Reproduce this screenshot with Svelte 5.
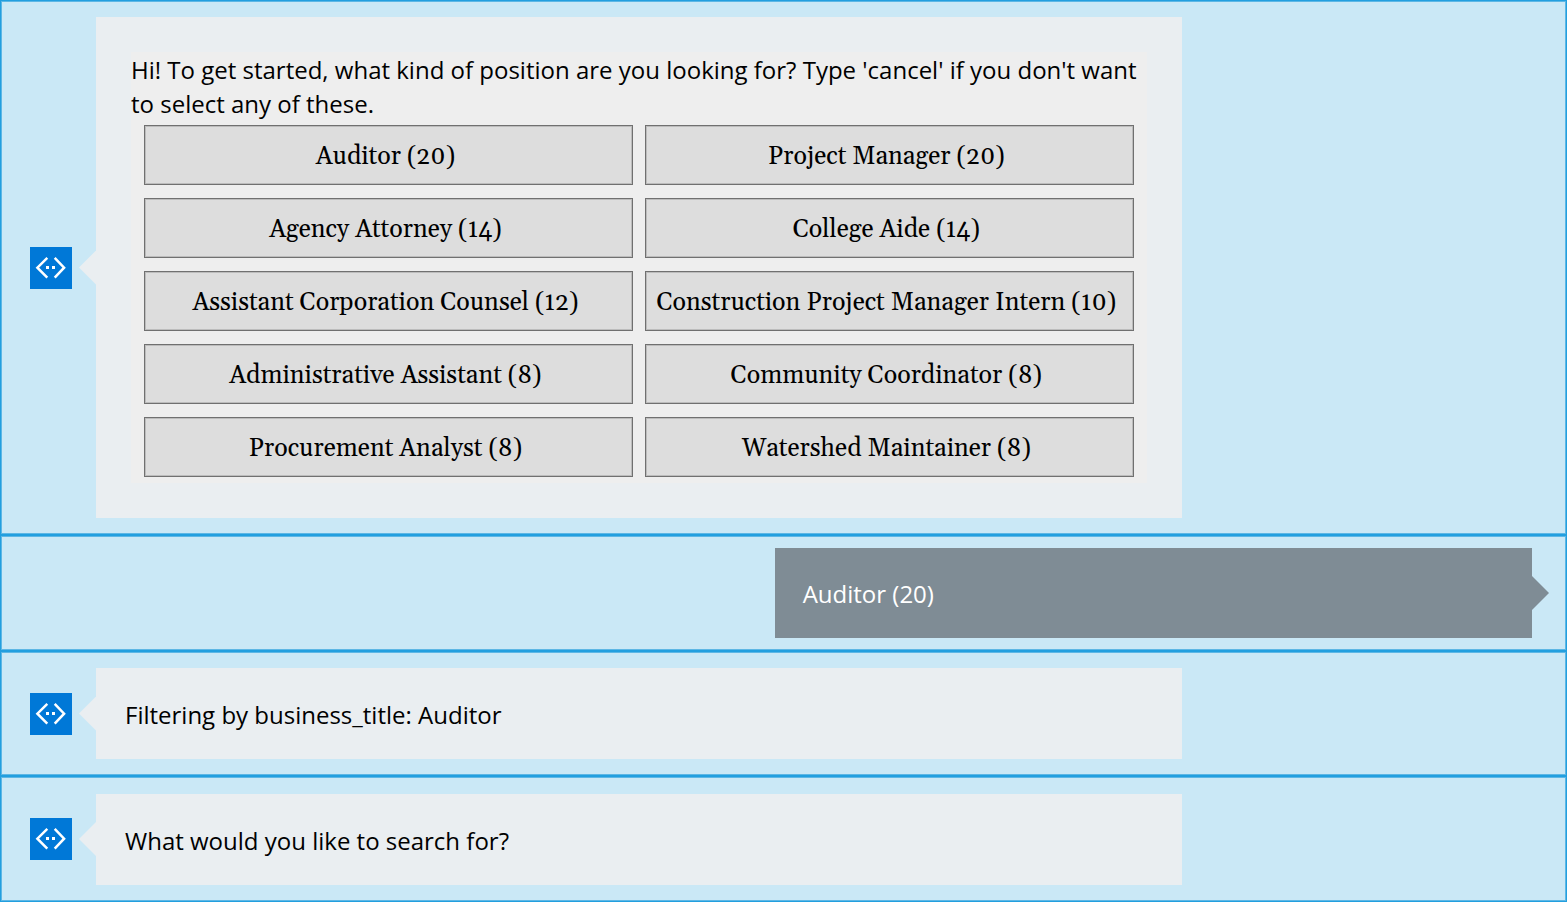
<script>
  const positions = [
    'Auditor (20)',
    'Project Manager (20)',
    'Agency Attorney (14)',
    'College Aide (14)',
    'Assistant Corporation Counsel (12)',
    'Construction Project Manager Intern (10)',
    'Administrative Assistant (8)',
    'Community Coordinator (8)',
    'Procurement Analyst (8)',
    'Watershed Maintainer (8)'
  ];

  let messages = $state([
    {
      from: 'bot',
      text: "Hi! To get started, what kind of position are you looking for? Type 'cancel' if you don't want to select any of these.",
      options: positions
    },
    { from: 'user', text: 'Auditor (20)' },
    { from: 'bot', text: 'Filtering by business_title: Auditor' },
    { from: 'bot', text: 'What would you like to search for?' }
  ]);

  function choose(option) {
    messages.push({ from: 'user', text: option });
  }
</script>

{#snippet avatar()}
  <svg class="avatar" viewBox="0 0 42 42" aria-hidden="true">
    <rect width="42" height="42" fill="#0078d7" />
    <g fill="none" stroke="#fff" stroke-width="2.5">
      <path d="M17.3 10.8 L7.4 20.7 L17.3 30.6" />
      <path d="M24.7 10.8 L34.1 20.7 L24.7 30.6" />
    </g>
    <path d="M16 19h3v3h-3zM22 19h3v3h-3z" fill="#fff" />
  </svg>
{/snippet}

<main class="chat">
  {#each messages as message}
    <article class="row {message.from}">
      {#if message.from === 'bot'}
        {@render avatar()}
      {/if}
      <div class="bubble" class:has-card={message.options}>
        {#if message.options}
          <div class="card">
            <p>{message.text}</p>
            <div class="options">
              {#each message.options as option}
                <button type="button" onclick={() => choose(option)}>{option}</button>
              {/each}
            </div>
          </div>
        {:else}
          <p>{message.text}</p>
        {/if}
      </div>
    </article>
  {/each}
</main>

<style>
  :global(body) {
    margin: 0;
    background: #cae8f6;
  }

  .chat {
    display: flex;
    flex-direction: column;
    min-height: 100vh;
    font-family: 'Segoe UI', 'Open Sans', 'Noto Sans', sans-serif;
    font-size: 24px;
    line-height: 34px;
    color: #000;
  }

  .row {
    display: grid;
    align-items: center;
    box-sizing: border-box;
    border: 1px solid #229fdf;
    box-shadow: inset 0 0 0 1px #5db7e5;
    background: #cae8f6;
  }

  .row:last-child {
    flex-grow: 1;
  }

  .bot {
    grid-template-columns: 42px 34fr 11fr;
    column-gap: 24px;
    padding: 16px 9px 16px 29px;
  }

  .user {
    grid-template-columns: 101fr 99fr;
    padding: 12px 34px 12px 1px;
  }

  .avatar {
    display: block;
    width: 42px;
    height: 42px;
  }

  .bubble {
    position: relative;
    box-sizing: border-box;
    padding: 30px 29px 27px;
    background: #eaeef1;
  }

  .bubble::before {
    content: '';
    position: absolute;
    top: calc(50% - 17px);
    width: 17px;
    height: 34px;
    background: inherit;
  }

  .bot .bubble::before {
    right: 100%;
    clip-path: polygon(100% 0, 0 50%, 100% 100%);
  }

  .user .bubble::before {
    left: 100%;
    clip-path: polygon(0 0, 100% 50%, 0 100%);
  }

  .user .bubble {
    grid-column: 2;
    padding: 29px 28px 27px;
    background: #7f8c95;
    color: #fff;
  }

  .bubble.has-card {
    padding: 35px;
  }

  .card {
    padding: 1px 0 6px;
    background: #eee;
  }

  p {
    margin: 0;
  }

  .options {
    display: grid;
    grid-template-columns: 1fr 1fr;
    gap: 13px 12px;
    padding: 4px 13px 0;
  }

  button {
    height: 60px;
    min-width: 0;
    padding: 4px 6px 0 0;
    border: 1px solid #707070;
    border-radius: 0;
    box-shadow: inset 0 0 0 1px #bcbcbc;
    background: #ddd;
    color: #000;
    font-family: Georgia, Gelasio, 'Liberation Serif', serif;
    font-size: 25px;
    line-height: 34px;
    cursor: pointer;
  }

  button:hover {
    background: #d2d2d2;
  }
</style>
